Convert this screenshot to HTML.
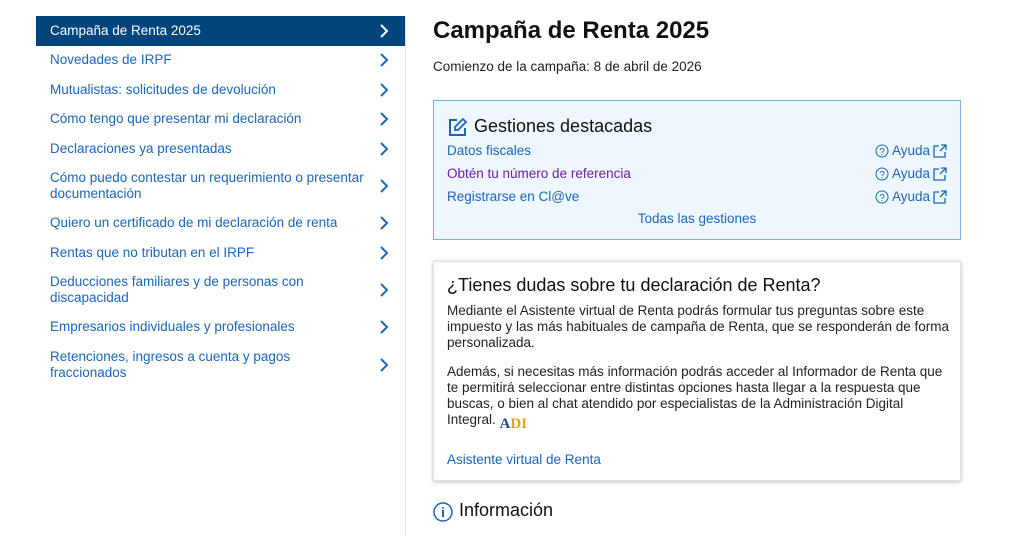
<!DOCTYPE html>
<html><head><meta charset="utf-8"><style>
*{margin:0;padding:0;box-sizing:border-box}
body{width:1024px;height:516px;overflow:hidden;background:#fff;font-family:"Liberation Sans",Arial,sans-serif;font-size:13.5px;color:#222;position:relative}
.side{position:absolute;left:36px;top:16px;width:370px;border-right:1px solid #e3e3e3;height:520px}
.it{display:flex;align-items:center;justify-content:space-between;padding:0 16px 0 14px;color:#1a66b8;line-height:16px;height:29.5px}
.it.d{height:45px}
.it.a{background:#00447c;color:#fff}
.it svg{flex:none;margin-left:10px}
h1{position:absolute;left:433px;top:17px;font-size:24px;font-weight:bold;color:#111}
.sub{position:absolute;left:433px;top:59px}
.box{position:absolute;left:433px;top:100px;width:528px;height:140px;background:#eff7fe;border:1px solid #7fb0de}
.box h2{position:absolute;left:40px;top:15px;font-size:18px;font-weight:normal;color:#111}
.row{position:absolute;left:13px;right:13px;display:flex;justify-content:space-between;color:#1a66b8}
.ay{display:flex;align-items:center;gap:3px}
.card{position:absolute;left:433px;top:261px;width:528px;height:220px;border:1px solid #e3e3e3;box-shadow:0 1px 4px rgba(0,0,0,.25);padding:13px 6px 13px 13px}
.card h3{font-size:18px;font-weight:normal;color:#111;margin-bottom:7px}
.card p{line-height:16px;margin-bottom:13px}
a{color:#1a66b8;text-decoration:none}
</style></head><body>
<div class="side">
<div class="it a">Campaña de Renta 2025<svg width="10" height="14"><path d="M2 1l6 6-6 6" stroke="#fff" stroke-width="2" fill="none"/></svg></div>
<div class="it">Novedades de IRPF<svg width="10" height="14"><path d="M2 1l6 6-6 6" stroke="#1a66b8" stroke-width="2" fill="none"/></svg></div>
<div class="it">Mutualistas: solicitudes de devolución<svg width="10" height="14"><path d="M2 1l6 6-6 6" stroke="#1a66b8" stroke-width="2" fill="none"/></svg></div>
<div class="it">Cómo tengo que presentar mi declaración<svg width="10" height="14"><path d="M2 1l6 6-6 6" stroke="#1a66b8" stroke-width="2" fill="none"/></svg></div>
<div class="it">Declaraciones ya presentadas<svg width="10" height="14"><path d="M2 1l6 6-6 6" stroke="#1a66b8" stroke-width="2" fill="none"/></svg></div>
<div class="it d">Cómo puedo contestar un requerimiento o presentar documentación<svg width="10" height="14"><path d="M2 1l6 6-6 6" stroke="#1a66b8" stroke-width="2" fill="none"/></svg></div>
<div class="it">Quiero un certificado de mi declaración de renta<svg width="10" height="14"><path d="M2 1l6 6-6 6" stroke="#1a66b8" stroke-width="2" fill="none"/></svg></div>
<div class="it">Rentas que no tributan en el IRPF<svg width="10" height="14"><path d="M2 1l6 6-6 6" stroke="#1a66b8" stroke-width="2" fill="none"/></svg></div>
<div class="it d">Deducciones familiares y de personas con discapacidad<svg width="10" height="14"><path d="M2 1l6 6-6 6" stroke="#1a66b8" stroke-width="2" fill="none"/></svg></div>
<div class="it">Empresarios individuales y profesionales<svg width="10" height="14"><path d="M2 1l6 6-6 6" stroke="#1a66b8" stroke-width="2" fill="none"/></svg></div>
<div class="it d">Retenciones, ingresos a cuenta y pagos fraccionados<svg width="10" height="14"><path d="M2 1l6 6-6 6" stroke="#1a66b8" stroke-width="2" fill="none"/></svg></div>
</div>
<h1>Campaña de Renta 2025</h1>
<div class="sub">Comienzo de la campaña: 8 de abril de 2026</div>
<div class="box">
<svg style="position:absolute;left:14px;top:16px" width="20" height="20" viewBox="0 0 20 20"><path d="M9 3H2v15h15v-7" stroke="#1a66b8" stroke-width="2" fill="none"/><path d="M15 2l3 3-8 8H7v-3z" stroke="#1a66b8" stroke-width="1.8" fill="none"/></svg>
<h2>Gestiones destacadas</h2>
<div class="row" style="top:42px"><a>Datos fiscales</a><span class="ay"><svg width="14" height="14"><circle cx="7" cy="7" r="6" stroke="#1a66b8" fill="none"/><text x="7" y="11" font-size="10" text-anchor="middle" fill="#1a66b8">?</text></svg>Ayuda<svg width="14" height="14"><path d="M6 2H1v11h11V8M8 1h5v5M13 1L7 7" stroke="#1a66b8" fill="none" stroke-width="1.3"/></svg></span></div>
<div class="row" style="top:65px"><a style="color:#6a1ea6">Obtén tu número de referencia</a><span class="ay"><svg width="14" height="14"><circle cx="7" cy="7" r="6" stroke="#1a66b8" fill="none"/><text x="7" y="11" font-size="10" text-anchor="middle" fill="#1a66b8">?</text></svg>Ayuda<svg width="14" height="14"><path d="M6 2H1v11h11V8M8 1h5v5M13 1L7 7" stroke="#1a66b8" fill="none" stroke-width="1.3"/></svg></span></div>
<div class="row" style="top:88px"><a>Registrarse en Cl@ve</a><span class="ay"><svg width="14" height="14"><circle cx="7" cy="7" r="6" stroke="#1a66b8" fill="none"/><text x="7" y="11" font-size="10" text-anchor="middle" fill="#1a66b8">?</text></svg>Ayuda<svg width="14" height="14"><path d="M6 2H1v11h11V8M8 1h5v5M13 1L7 7" stroke="#1a66b8" fill="none" stroke-width="1.3"/></svg></span></div>
<div class="row" style="top:110px;justify-content:center"><a>Todas las gestiones</a></div>
</div>
<div class="card">
<h3>¿Tienes dudas sobre tu declaración de Renta?</h3>
<p>Mediante el Asistente virtual de Renta podrás formular tus preguntas sobre este impuesto y las más habituales de campaña de Renta, que se responderán de forma personalizada.</p>
<p>Además, si necesitas más información podrás acceder al Informador de Renta que te permitirá seleccionar entre distintas opciones hasta llegar a la respuesta que buscas, o bien al chat atendido por especialistas de la Administración Digital Integral. <span style="display:inline-block;height:20px;line-height:20px;vertical-align:-4px;font-weight:bold;color:#1a4a9c;font-family:'Liberation Serif',serif;font-size:15px">A<span style="color:#e8a020">DI</span></span></p>
<p style="margin-top:18px"><a>Asistente virtual de Renta</a></p>
</div>
<svg style="position:absolute;left:433px;top:502px" width="20" height="20"><circle cx="10" cy="10" r="9" stroke="#1a66b8" stroke-width="1.5" fill="none"/><path d="M10 8v7M10 5v1.5" stroke="#1a66b8" stroke-width="2"/></svg>
<div style="position:absolute;left:459px;top:500px;font-size:18px;color:#111">Información</div>
</body></html>
